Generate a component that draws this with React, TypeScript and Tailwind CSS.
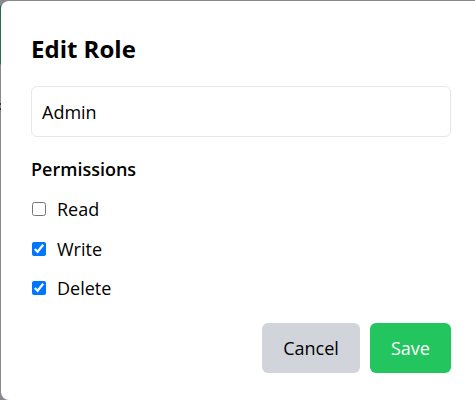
import React from "react";

export default function App() {
  const perms = [
    { label: "Read", checked: false },
    { label: "Write", checked: true },
    { label: "Delete", checked: true },
  ];
  return (
    <div
      className="relative w-[475px] h-[400px] overflow-hidden bg-[#86898e]"
      style={{ fontFamily: '"Open Sans", "Noto Sans", sans-serif' }}
    >
      <div className="absolute left-[-10px] top-[5px] w-[12px] h-[60px] rounded bg-[#1f7248]" />
      <div className="absolute left-[-4px] top-[103px] w-[6px] h-[2px] bg-[#2b3040]" />
      <div className="absolute left-[-4px] top-[108px] w-[6px] h-[2px] bg-[#2b3040]" />
      <div className="absolute left-[1px] top-[1px] w-[482px] h-[399px] rounded-lg bg-white pl-[30px] pr-[32px] pt-[32px] text-black">
        <h2 className="text-2xl leading-8 font-bold">Edit Role</h2>
        <input
          type="text"
          defaultValue="Admin"
          className="mt-[21px] block w-[420px] h-[51px] rounded-md border border-[#e5e7eb] px-[10px] text-lg text-black outline-none"
        />
        <div className="mt-[18px] text-lg leading-7 font-semibold">Permissions</div>
        <div className="mt-[12px] flex flex-col gap-[11.5px]">
          {perms.map((p) => (
            <label key={p.label} className="flex items-center gap-3 text-lg leading-7">
              <input type="checkbox" defaultChecked={p.checked} className="w-[14px] h-[14px] ml-[1px]" />
              <span className="-ml-[1px]">{p.label}</span>
            </label>
          ))}
        </div>
        <div className="mt-[21px] flex justify-end gap-[10px] w-[420px]">
          <button className="h-[50px] w-[98px] rounded-md bg-[#d1d5db] text-lg text-black">Cancel</button>
          <button className="h-[50px] w-[81px] rounded-md bg-[#22c55e] text-lg text-white">Save</button>
        </div>
      </div>
    </div>
  );
}
